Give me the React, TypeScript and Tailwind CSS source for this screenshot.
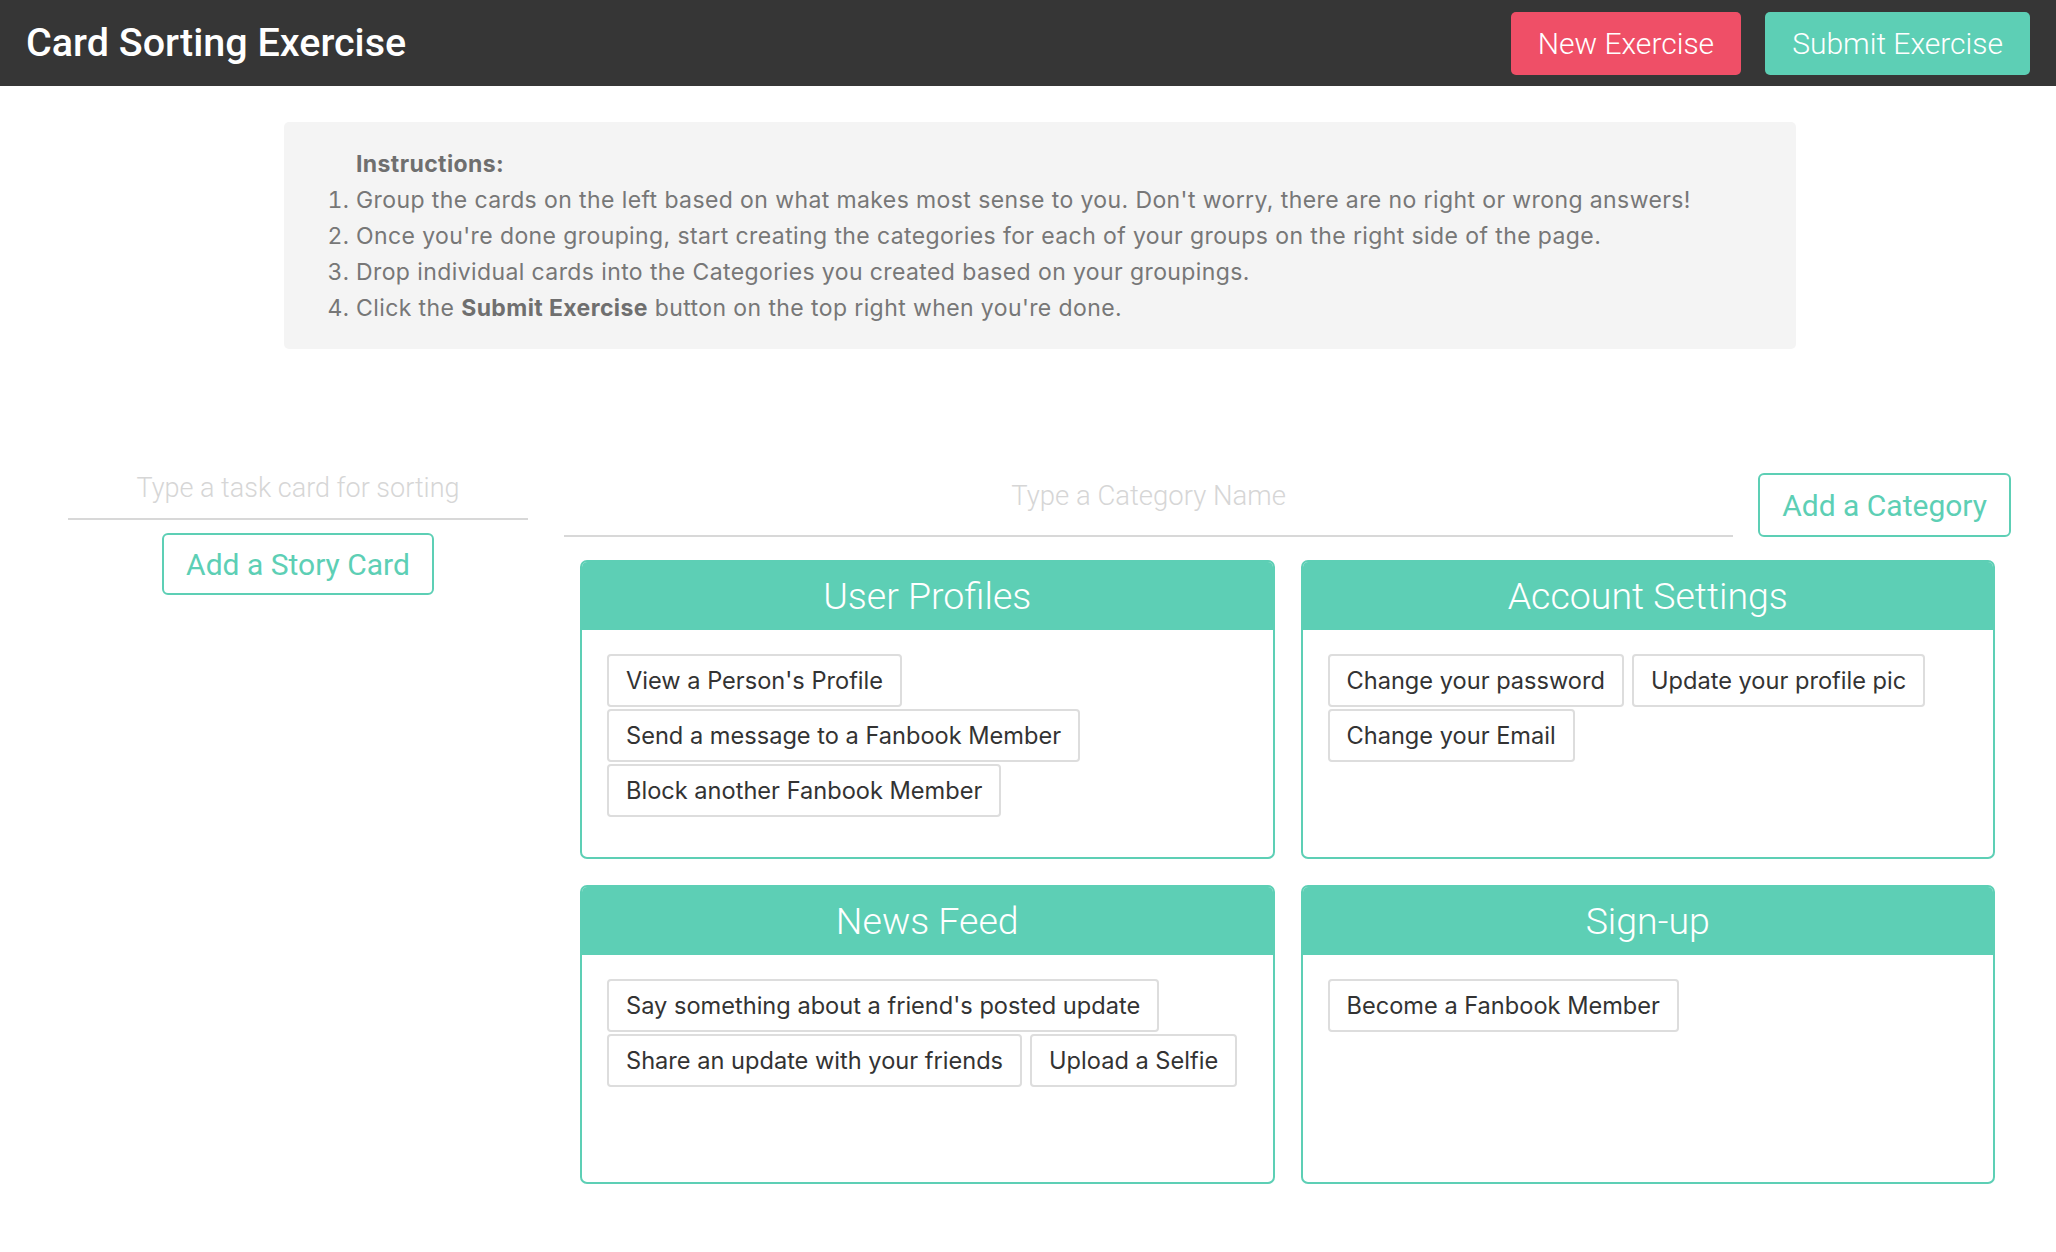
import React, { useState } from 'react';

type Category = {
  name: string;
  cards: string[];
};

const initialCategories: Category[] = [
  {
    name: 'User Profiles',
    cards: ["View a Person's Profile", 'Send a message to a Fanbook Member', 'Block another Fanbook Member'],
  },
  {
    name: 'Account Settings',
    cards: ['Change your password', 'Update your profile pic', 'Change your Email'],
  },
  {
    name: 'News Feed',
    cards: ["Say something about a friend's posted update", 'Share an update with your friends', 'Upload a Selfie'],
  },
  {
    name: 'Sign-up',
    cards: ['Become a Fanbook Member'],
  },
];

function CategoryCard({ category }: { category: Category }) {
  return (
    <div className="h-[299px] overflow-hidden rounded-[7px] border-2 border-[#5dcfb5] bg-white">
      <div className="flex h-[68px] items-center justify-center bg-[#5dcfb5] text-[37.5px] font-light text-white">
        {category.name}
      </div>
      <div className="flex flex-wrap content-start gap-x-2 gap-y-[2px] px-[25px] pt-6">
        {category.cards.map((card) => (
          <div
            key={card}
            className="flex h-[53px] items-center rounded-[4px] border-2 border-[#dddddd] bg-white px-[17px] font-['Inter',sans-serif] text-[23.6px] text-[#333333]"
          >
            {card}
          </div>
        ))}
      </div>
    </div>
  );
}

export default function App() {
  const [taskCard, setTaskCard] = useState('');
  const [categoryName, setCategoryName] = useState('');
  const [categories] = useState(initialCategories);

  return (
    <div className="min-h-screen bg-white font-['Roboto',sans-serif]">
      {/* Top bar */}
      <header className="flex h-[86px] items-center justify-between bg-[#363636] px-[26px]">
        <h1 className="text-[39.5px] font-medium text-white">Card Sorting Exercise</h1>
        <div className="flex gap-6">
          <button className="h-[63px] rounded-[5px] bg-[#ef4f67] px-[27px] text-[30px] font-light text-white">
            New Exercise
          </button>
          <button className="h-[63px] rounded-[5px] bg-[#5dcfb5] px-[27px] text-[30px] font-light text-white">
            Submit Exercise
          </button>
        </div>
      </header>

      {/* Instructions */}
      <div className="ml-[284px] mt-9 w-[1512px] rounded-[5px] bg-[#f4f4f4] pb-[23px] pl-[72px] pt-6 font-['Inter',sans-serif] text-[23px] leading-[36px] tracking-[0.4px] text-[#777777]">
        <p className="font-bold text-[#6f6f6f]">Instructions:</p>
        <ol className="list-decimal">
          <li>Group the cards on the left based on what makes most sense to you. Don't worry, there are no right or wrong answers!</li>
          <li>Once you're done grouping, start creating the categories for each of your groups on the right side of the page.</li>
          <li>Drop individual cards into the Categories you created based on your groupings.</li>
          <li>
            Click the <span className="font-bold text-[#6f6f6f]">Submit Exercise</span> button on the top right when you're done.
          </li>
        </ol>
      </div>

      <div className="mt-[109px] flex pb-16">
        {/* Story cards */}
        <div className="ml-[68px] flex w-[460px] flex-col items-center">
          <input
            value={taskCard}
            onChange={(e) => setTaskCard(e.target.value)}
            placeholder="Type a task card for sorting"
            className="h-[62px] w-full border-b-2 border-[#d8d8d8] text-center text-[27px] font-light text-[#333] outline-none placeholder:text-[#d6d6d6]"
          />
          <button className="mt-[13px] h-[62px] rounded-[6px] border-2 border-[#5dcfb5] px-[22px] text-[30px] text-[#5dcfb5]">
            Add a Story Card
          </button>
        </div>

        {/* Categories */}
        <div className="ml-9 w-[1447px] pt-[13px]">
          <div className="flex items-end gap-[25px]">
            <input
              value={categoryName}
              onChange={(e) => setCategoryName(e.target.value)}
              placeholder="Type a Category Name"
              className="h-[66px] flex-1 border-b-2 border-[#d8d8d8] pb-4 text-center text-[27.5px] font-light text-[#333] outline-none placeholder:text-[#d6d6d6]"
            />
            <button className="h-[64px] rounded-[6px] border-2 border-[#5dcfb5] px-[22px] text-[30px] text-[#5dcfb5]">
              Add a Category
            </button>
          </div>
          <div className="mx-4 mt-[23px] grid grid-cols-2 gap-[26px]">
            {categories.map((c) => (
              <CategoryCard key={c.name} category={c} />
            ))}
          </div>
        </div>
      </div>
    </div>
  );
}
